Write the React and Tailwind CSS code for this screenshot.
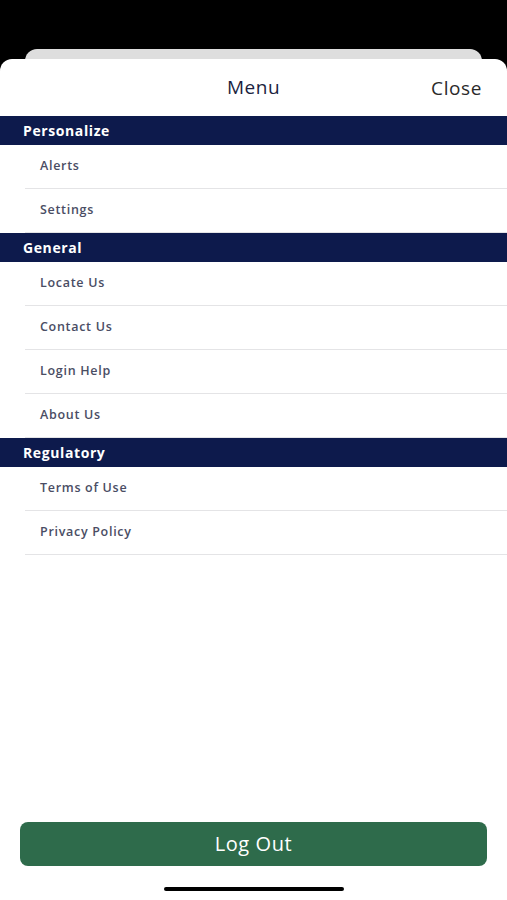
import React from "react";

const sections = [
  { title: "Personalize", items: ["Alerts", "Settings"] },
  { title: "General", items: ["Locate Us", "Contact Us", "Login Help", "About Us"] },
  { title: "Regulatory", items: ["Terms of Use", "Privacy Policy"] },
];

const font = { fontFamily: '"Open Sans", "Liberation Sans", sans-serif' };

const App = () => {
  return (
    <div className="h-[900px] w-full bg-black flex flex-col" style={font}>
      <div className="h-[49px] shrink-0" />
      <div className="mx-[25px] h-[20px] shrink-0 rounded-t-[12px] bg-[#dedede]" />
      <div className="-mt-[10px] flex-1 flex flex-col rounded-t-[12px] bg-white">
        <div className="relative h-[57px] flex items-center justify-center">
          <span className="text-[19px] font-medium tracking-[0.5px] text-[#1c1f3f]">Menu</span>
          <span className="absolute right-[25px] top-1/2 -translate-y-1/2 text-[19px] tracking-[0.6px] text-[#2a2a2a]">
            Close
          </span>
        </div>

        {sections.map((section) => (
          <div key={section.title}>
            <div className="h-[29px] flex items-center px-[23px] bg-[#0d1a4c]">
              <span className="text-[14px] font-bold text-white tracking-[0.6px]">
                {section.title}
              </span>
            </div>
            {section.items.map((item) => (
              <div
                key={item}
                className="ml-[25px] h-[44px] flex items-center pl-[15px] border-b border-[#e4e4e6]"
              >
                <span className="text-[12.5px] font-semibold tracking-[0.7px] text-[#4a4d64]">
                  {item}
                </span>
              </div>
            ))}
          </div>
        ))}

        <div className="mt-auto px-[20px]">
          <button className="w-full h-[44px] rounded-[8px] bg-[#2e6b4b] text-white text-[20px] tracking-[0.6px]">
            Log Out
          </button>
        </div>
        <div className="h-[34px] flex items-start justify-center pt-[21px]">
          <div className="w-[180px] h-[4px] rounded-full bg-black" />
        </div>
      </div>
    </div>
  );
};

export default App;
